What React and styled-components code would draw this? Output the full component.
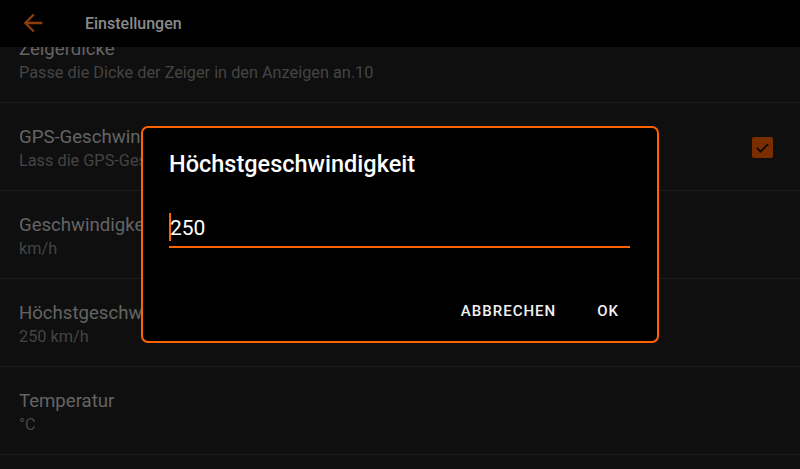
import React from "react";
import styled, { createGlobalStyle } from "styled-components";

const Global = createGlobalStyle`
  html, body { margin: 0; padding: 0; background: #0f0f0f; }
  body { font-family: Roboto, "Noto Sans", "Liberation Sans", sans-serif; }
  #root { width: 800px; height: 469px; }
`;

const Page = styled.div`
  position: relative;
  width: 800px;
  height: 469px;
  display: flex;
  flex-direction: column;
  background: #0f0f0f;
  overflow: hidden;
`;

const Toolbar = styled.div`
  height: 47px;
  flex: none;
  background: #000;
  display: flex;
  align-items: center;
  padding-left: 19px;
  position: relative;
  z-index: 1;
`;

const BackIcon = styled.svg`
  width: 28px;
  height: 28px;
  margin-top: -1px;
`;

const ToolbarTitle = styled.div`
  color: #8a8a8a;
  font-size: 16px;
  font-weight: 500;
  margin-left: 38px;
`;

const Scroller = styled.div`
  flex: 1;
  overflow: hidden;
`;

const ListInner = styled.div`
  margin-top: -32px;
`;

const Row = styled.div`
  height: 88px;
  box-sizing: border-box;
  border-bottom: 1px solid #1c1c1c;
  display: flex;
  align-items: flex-start;
  padding: 23px 27px 0 19px;
`;

const RowText = styled.div`
  flex: 1;
  display: flex;
  flex-direction: column;
  gap: 3px;
`;

const RowTitle = styled.div`
  color: #646464;
  font-size: 18.6px;
  line-height: 22px;
  white-space: nowrap;
`;

const RowSub = styled.div`
  color: #444444;
  font-size: 16.3px;
  line-height: 20px;
  white-space: nowrap;
`;

const Check = styled.div`
  align-self: center;
  width: 21px;
  height: 21px;
  border-radius: 2px;
  background: #7a2e00;
  display: flex;
  align-items: center;
  justify-content: center;
  margin-top: -22px;
`;

const Overlay = styled.div`
  position: absolute;
  inset: 0;
  display: flex;
  align-items: center;
  justify-content: center;
  z-index: 2;
`;

const Dialog = styled.div`
  width: 518px;
  height: 217px;
  box-sizing: border-box;
  background: #000;
  border: 2px solid #ff6200;
  border-radius: 7px;
  display: flex;
  flex-direction: column;
  padding: 22px 26px 0 26px;
`;

const DialogTitle = styled.div`
  color: #fff;
  font-size: 23.5px;
  font-weight: 500;
  line-height: 28px;
`;

const Field = styled.div`
  margin-top: 34px;
  height: 36px;
  box-sizing: border-box;
  border-bottom: 2px solid #ff6200;
  display: flex;
  align-items: center;
  margin-right: 1px;
`;

const Cursor = styled.span`
  width: 2px;
  height: 28px;
  background: #ff6200;
  margin-top: -4px;
`;

const FieldText = styled.span`
  color: #fff;
  font-size: 21px;
  margin-left: -1px;
  margin-top: -2px;
`;

const Actions = styled.div`
  margin-top: auto;
  margin-bottom: 20px;
  display: flex;
  justify-content: flex-end;
  gap: 41px;
  padding-right: 12px;
`;

const ActionButton = styled.button`
  background: none;
  border: none;
  padding: 0;
  color: #f2f2f2;
  font-family: inherit;
  font-size: 15px;
  font-weight: 500;
  letter-spacing: 1px;
  line-height: 20px;
`;

const rows = [
  { title: "Zeigerdicke", sub: "Passe die Dicke der Zeiger in den Anzeigen an.10" },
  {
    title: "GPS-Geschwindigkeit",
    sub: "Lass die GPS-Geschwindigkeit anstatt der OBD-Geschwindigkeit in den Anzeigen.",
    check: true,
  },
  { title: "Geschwindigkeit", sub: "km/h" },
  { title: "Höchstgeschwindigkeit", sub: "250 km/h" },
  { title: "Temperatur", sub: "°C" },
];

export default function App() {
  return (
    <>
      <Global />
      <Page>
        <Toolbar>
          <BackIcon viewBox="0 0 24 24">
            <path
              d="M20 11H7.83l5.59-5.59L12 4l-8 8 8 8 1.41-1.41L7.83 13H20v-2z"
              fill="#8e3c0c"
            />
          </BackIcon>
          <ToolbarTitle>Einstellungen</ToolbarTitle>
        </Toolbar>
        <Scroller>
          <ListInner>
            {rows.map((r) => (
              <Row key={r.title}>
                <RowText>
                  <RowTitle>{r.title}</RowTitle>
                  <RowSub>{r.sub}</RowSub>
                </RowText>
                {r.check && (
                  <Check>
                    <svg width="15" height="15" viewBox="0 0 24 24">
                      <path d="M3 12.5l6 6L21 6.5" fill="none" stroke="#140800" strokeWidth="3" />
                    </svg>
                  </Check>
                )}
              </Row>
            ))}
          </ListInner>
        </Scroller>
        <Overlay>
          <Dialog>
            <DialogTitle>Höchstgeschwindigkeit</DialogTitle>
            <Field>
              <Cursor />
              <FieldText>250</FieldText>
            </Field>
            <Actions>
              <ActionButton>ABBRECHEN</ActionButton>
              <ActionButton>OK</ActionButton>
            </Actions>
          </Dialog>
        </Overlay>
      </Page>
    </>
  );
}
